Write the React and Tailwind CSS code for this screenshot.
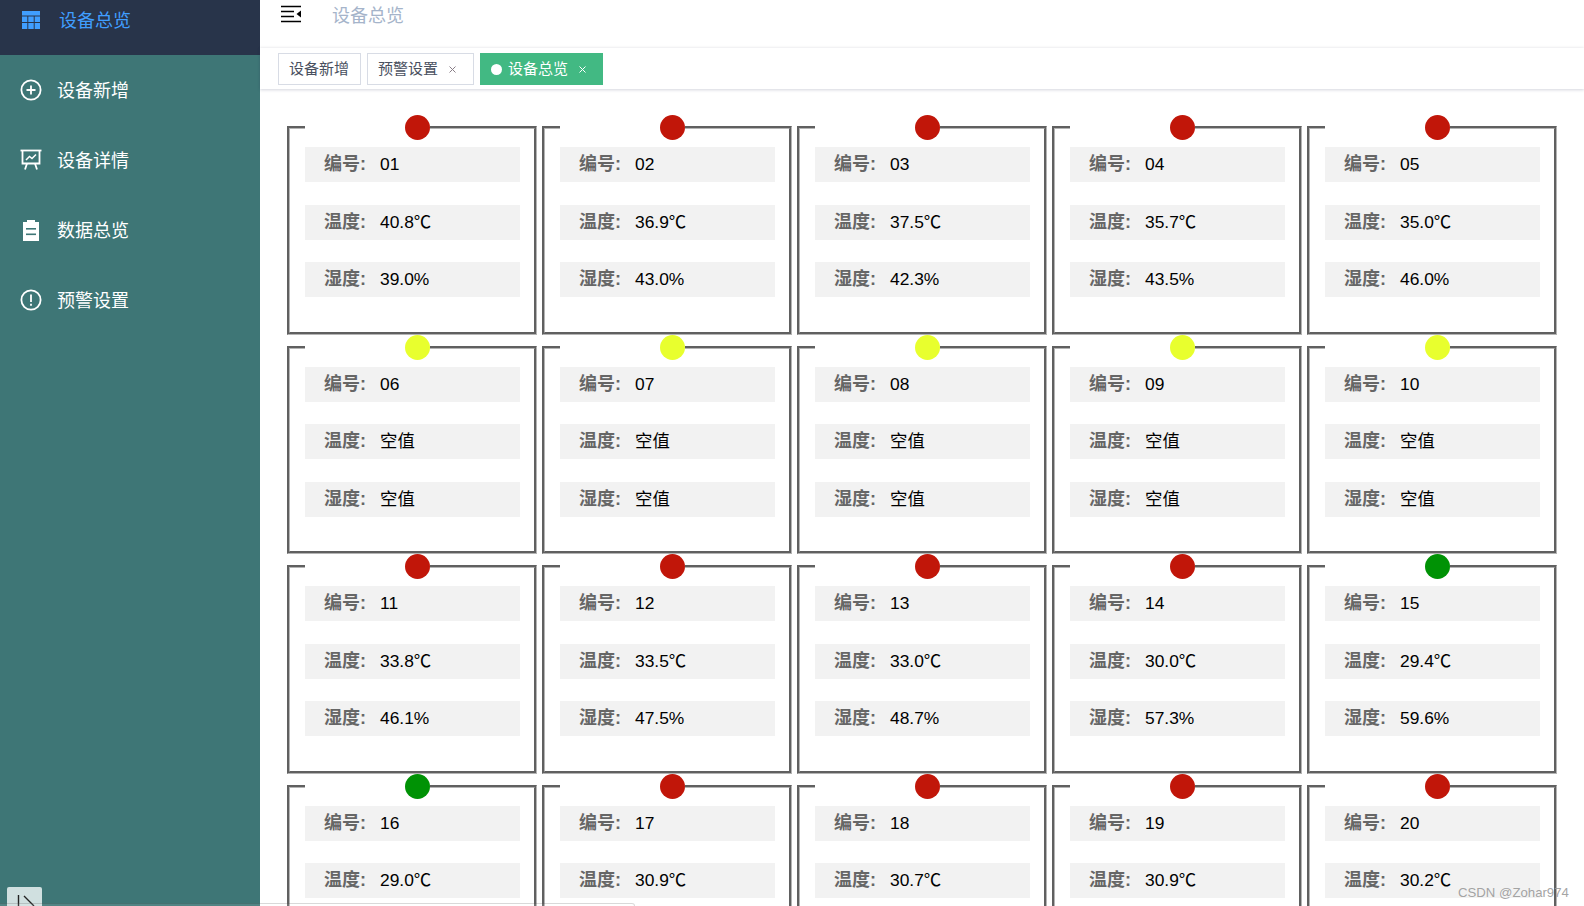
const font = { fontFamily: '"Liberation Sans","Noto Sans CJK SC",sans-serif' };

const RED = "bg-[#c11609]";
const YEL = "bg-[#e8ff2e]";
const GRN = "bg-[#009205]";

const cards = [
  ["01", "40.8℃", "39.0%", RED], ["02", "36.9℃", "43.0%", RED], ["03", "37.5℃", "42.3%", RED], ["04", "35.7℃", "43.5%", RED], ["05", "35.0℃", "46.0%", RED],
  ["06", "空值", "空值", YEL], ["07", "空值", "空值", YEL], ["08", "空值", "空值", YEL], ["09", "空值", "空值", YEL], ["10", "空值", "空值", YEL],
  ["11", "33.8℃", "46.1%", RED], ["12", "33.5℃", "47.5%", RED], ["13", "33.0℃", "48.7%", RED], ["14", "30.0℃", "57.3%", RED], ["15", "29.4℃", "59.6%", GRN],
  ["16", "29.0℃", null, GRN], ["17", "30.9℃", null, RED], ["18", "30.7℃", null, RED], ["19", "30.9℃", null, RED], ["20", "30.2℃", null, RED],
];

function Row({ label, value }) {
  return (
    <div className="flex items-center w-[215px] h-[35px] bg-[#f2f2f2] pl-[19px] text-[18px] leading-[33px]">
      <span className="w-[56px] shrink-0 font-bold text-[#666666]">{label}:</span>
      <span className="text-black text-[17.4px]">{value}</span>
    </div>
  );
}

function Card({ id, temp, hum, color }) {
  return (
    <fieldset className="w-[250px] h-[219.5px] border-[3px] [border-style:groove] border-[#b4b4b4] min-w-0">
      <legend className="ml-[15px] pl-[100px] block">
        <div className={`w-[25px] h-[25px] rounded-full ${color}`} />
      </legend>
      <div className="ml-[15px] mt-[7px] flex flex-col gap-y-[22.5px]">
        <Row label="编号" value={id} />
        <Row label="温度" value={temp} />
        {hum && <Row label="湿度" value={hum} />}
      </div>
    </fieldset>
  );
}

const GridIcon = () => (
  <svg width="18" height="18" viewBox="0 0 18 18" fill="#409eff">
    <rect x="0" y="0" width="18" height="4.5" />
    <rect x="0" y="5.5" width="5.3" height="5.5" />
    <rect x="6.3" y="5.5" width="5.4" height="5.5" />
    <rect x="12.7" y="5.5" width="5.3" height="5.5" />
    <rect x="0" y="12" width="5.3" height="6" />
    <rect x="6.3" y="12" width="5.4" height="6" />
    <rect x="12.7" y="12" width="5.3" height="6" />
  </svg>
);
const PlusIcon = () => (
  <svg width="22" height="22" viewBox="0 0 22 22" fill="none" stroke="#fff" strokeWidth="1.8">
    <circle cx="11" cy="11" r="9.6" />
    <path d="M11 6.5v9M6.5 11h9" />
  </svg>
);
const BoardIcon = () => (
  <svg width="22" height="22" viewBox="0 0 22 22" fill="none" stroke="#fff" strokeWidth="1.8">
    <path d="M0.5 1.5h21" />
    <path d="M2.5 1.5v13h17v-13" />
    <path d="M6 11l3.5-3.5 2.5 2 4-4" strokeWidth="1.5" />
    <path d="M7 14.5l-2 6M15 14.5l2 6" />
  </svg>
);
const ClipIcon = () => (
  <svg width="18" height="22" viewBox="0 0 18 22" fill="#fff">
    <path d="M1 3h4V1h8v2h4v19H1z" />
    <rect x="4" y="9" width="10" height="1.6" fill="#3e7676" />
    <rect x="4" y="14.5" width="10" height="1.6" fill="#3e7676" />
  </svg>
);
const AlertIcon = () => (
  <svg width="22" height="22" viewBox="0 0 22 22" fill="none" stroke="#fff" strokeWidth="1.8">
    <circle cx="11" cy="11" r="9.6" />
    <path d="M11 5.5v7.5" />
    <path d="M11 14.8v1.9" />
  </svg>
);

const menu = [
  [<PlusIcon key="a" />, "设备新增", "pl-[20px]"],
  [<BoardIcon key="b" />, "设备详情", "pl-[20px]"],
  [<ClipIcon key="c" />, "数据总览", "pl-[22px]"],
  [<AlertIcon key="d" />, "预警设置", "pl-[20px]"],
];

function Tag({ children, closable, active, className }) {
  return (
    <div
      className={`h-[32px] flex items-center text-[15px] border ${
        active ? "bg-[#42b983] border-[#42b983] text-white" : "bg-white border-[#d8dce5] text-[#495060]"
      } ${className}`}
    >
      {active && <span className="w-[11px] h-[11px] rounded-full bg-white mr-[6px]" />}
      <span>{children}</span>
      {closable && (
        <svg width="7" height="7" viewBox="0 0 7 7" className="ml-[11px]" stroke={active ? "#fff" : "#8a7f88"} strokeWidth="1">
          <path d="M0.5 0.5l6 6M6.5 0.5l-6 6" />
        </svg>
      )}
    </div>
  );
}

export default function App() {
  return (
    <div className="relative flex w-[1584px] h-[906px] overflow-hidden bg-white" style={font}>
      <aside className="w-[260px] shrink-0 bg-[#3e7676] flex flex-col">
        <div className="h-[55px] bg-[#28344a] flex items-start pt-[11px] pl-[22px]">
          <GridIcon />
          <span className="ml-[19px] -mt-[2px] text-[18px] leading-[24px] text-[#409eff]">设备总览</span>
        </div>
        {menu.map(([icon, text, pad]) => (
          <div key={text} className="h-[70px] flex items-center text-white text-[18px]">
            <span className={`w-[57px] flex justify-start ${pad}`}>{icon}</span>
            <span className="pt-[2px]">{text}</span>
          </div>
        ))}
      </aside>

      <main className="flex-1 flex flex-col min-w-0">
        <header className="h-[48px] shrink-0 flex items-start bg-white">
          <svg width="20" height="18" viewBox="0 0 20 18" className="ml-[21px] mt-[5px]">
            <path d="M0 1.5h20M0 6.5h13M0 11.5h13M0 16.5h20" stroke="#000" strokeWidth="1.6" />
            <path d="M15.5 9L20 5.5v7z" fill="#000" />
          </svg>
          <span className="ml-[31px] mt-[3px] text-[18px] leading-[26px] text-[#a5b4ca]">设备总览</span>
        </header>

        <nav className="h-[41px] shrink-0 flex items-start pt-[5px] pl-[18px] gap-x-[6px] bg-white shadow-[0_1px_3px_rgba(40,50,90,0.2),0_-1px_3px_rgba(0,0,0,0.04)] z-10">
          <Tag className="w-[83px] pl-[10px]">设备新增</Tag>
          <Tag className="w-[107px] pl-[10px]" closable>预警设置</Tag>
          <Tag className="w-[123px] pl-[10px]" closable active>设备总览</Tag>
        </nav>

        <section className="flex-1 min-h-0 overflow-hidden pt-[26px] pl-[27px]">
          <div className="grid grid-cols-[repeat(5,250px)] gap-x-[5px]">
            {cards.map(([id, temp, hum, color]) => (
              <Card key={id} id={id} temp={temp} hum={hum} color={color} />
            ))}
          </div>
        </section>
      </main>

      <div className="absolute left-[7px] bottom-0 w-[35px] h-[19px] bg-[#d0e0e0] rounded-t-[2px]">
        <svg width="35" height="19" viewBox="0 0 35 19" fill="none" stroke="#222" strokeWidth="1.4">
          <path d="M11.5 8v11M17 9l10 10" />
        </svg>
      </div>
      <div className="absolute left-0 bottom-0 w-[635px] h-[3px] bg-white/10 border-t border-r border-black/15 rounded-tr-[4px]" />
      <span className="absolute left-[1458px] top-[884px] text-[13.2px] leading-[18px] text-[#999999]/90 whitespace-nowrap">
        CSDN @Zohar974
      </span>
    </div>
  );
}
